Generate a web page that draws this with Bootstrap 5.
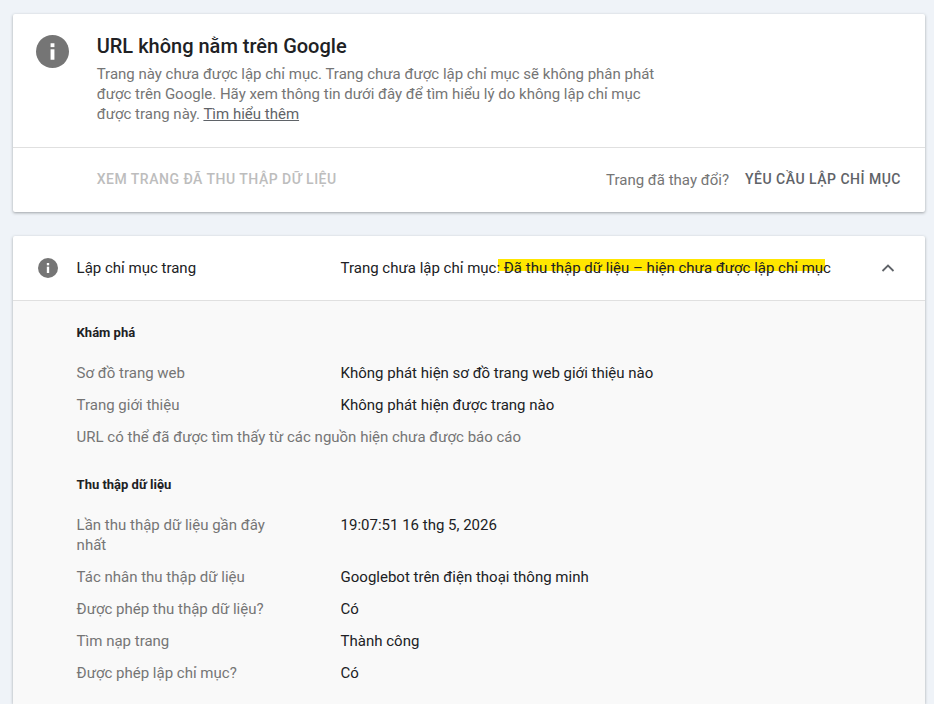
<!DOCTYPE html>
<html lang="vi">
  <head>
    <meta charset="UTF-8" />
    <title>Kiểm tra URL</title>
    <link href="https://cdn.jsdelivr.net/npm/bootstrap@5.3.0/dist/css/bootstrap.min.css" rel="stylesheet" />
    <style>
      html, body { height: 704px; overflow: hidden; }
      body {
        background: #eff3f8;
        font-family: Roboto, "Liberation Sans", sans-serif;
        color: #202124;
        padding: 14px 9px 0 13px;
        font-size: 15px;
        line-height: 20px;
      }
      .sheet {
        background: #fff;
        border-radius: 2px;
        box-shadow: 0 1px 3px rgba(60, 64, 67, 0.45);
      }
      .sheet-main { height: 198px; margin-bottom: 24px; }
      .verdict { height: 134px; padding: 21px 24px 0 23px; border-bottom: 1px solid #e0e0e0; }
      .verdict-text { width: 570px; margin-left: 27.7px; margin-top: -1px; }
      .verdict-title { font-size: 20px; font-weight: 500; line-height: 24px; margin-bottom: 6px; }
      .verdict-desc { color: #757575; }
      .verdict-desc a { color: #5f6368; }
      .info-big { width: 33px; height: 33px; }
      .info-small { width: 20px; height: 20px; margin-right: 18.6px; }
      .actions { height: 64px; padding: 0 24px 0 83.7px; }
      .act-link { font-size: 14px; font-weight: 500; letter-spacing: 0.5px; padding-bottom: 2px; }
      .act-off { color: #bdbdbd; }
      .act-on { color: #5f6368; }
      .act-q { color: #757575; margin-right: 16px; }
      .coverage { height: 65px; padding: 0 29px 0 25px; border-bottom: 1px solid #e0e0e0; }
      .cov-label { width: 264px; }
      .cov-value { position: relative; z-index: 0; }
      .mark-wrap { position: relative; }
      .mark-wrap::before {
        content: "";
        position: absolute;
        z-index: -1;
        left: -6px;
        right: 6px;
        top: 0;
        height: 12px;
        background: #ffe600;
      }
      .detail { background: #f9f9f9; padding: 24px 24px 0 63.6px; height: 403px; }
      .group-title { font-size: 13px; font-weight: 700; line-height: 16px; margin-bottom: 22px; }
      .group-gap { margin-top: 30px; }
      .info-row { display: flex; margin-bottom: 12px; }
      .info-key { width: 264px; flex: none; color: #757575; padding-right: 60px; }
      .info-wide { color: #757575; margin-bottom: 12px; }
    </style>
  </head>
  <body>
    <div class="sheet sheet-main">
      <div class="verdict d-flex align-items-start">
        <svg class="info-big flex-none" viewBox="0 0 24 24"><circle cx="12" cy="12" r="12" fill="#757575"/><rect x="10.6" y="10.4" width="2.8" height="7.6" fill="#fff"/><rect x="10.6" y="6" width="2.8" height="2.8" fill="#fff"/></svg>
        <div class="verdict-text">
          <div class="verdict-title">URL không nằm trên Google</div>
          <div class="verdict-desc">Trang này chưa được lập chỉ mục. Trang chưa được lập chỉ mục sẽ không phân phát được trên Google. Hãy xem thông tin dưới đây để tìm hiểu lý do không lập chỉ mục được trang này. <a href="#">Tìm hiểu thêm</a></div>
        </div>
      </div>
      <div class="actions d-flex align-items-center">
        <span class="act-link act-off">XEM TRANG ĐÃ THU THẬP DỮ LIỆU</span>
        <span class="act-q ms-auto">Trang đã thay đổi?</span>
        <span class="act-link act-on">YÊU CẦU LẬP CHỈ MỤC</span>
      </div>
    </div>

    <div class="sheet">
      <div class="coverage d-flex align-items-center">
        <svg class="info-small" viewBox="0 0 24 24"><circle cx="12" cy="12" r="12" fill="#757575"/><rect x="10.6" y="10.4" width="2.8" height="7.6" fill="#fff"/><rect x="10.6" y="6" width="2.8" height="2.8" fill="#fff"/></svg>
        <span class="cov-label">Lập chỉ mục trang</span>
        <span class="cov-value">Trang chưa lập chỉ mục: <span class="mark-wrap">Đã thu thập dữ liệu – hiện chưa được lập chỉ mục</span></span>
        <svg class="ms-auto" width="16" height="16" viewBox="0 0 16 16"><path d="M2.5 11 8 5.5 13.5 11" fill="none" stroke="#5f6368" stroke-width="1.8"/></svg>
      </div>
      <div class="detail">
        <div class="group-title">Khám phá</div>
        <div class="info-row"><div class="info-key">Sơ đồ trang web</div><div>Không phát hiện sơ đồ trang web giới thiệu nào</div></div>
        <div class="info-row"><div class="info-key">Trang giới thiệu</div><div>Không phát hiện được trang nào</div></div>
        <div class="info-wide">URL có thể đã được tìm thấy từ các nguồn hiện chưa được báo cáo</div>
        <div class="group-title group-gap">Thu thập dữ liệu</div>
        <div class="info-row"><div class="info-key">Lần thu thập dữ liệu gần đây nhất</div><div>19:07:51 16 thg 5, 2026</div></div>
        <div class="info-row"><div class="info-key">Tác nhân thu thập dữ liệu</div><div>Googlebot trên điện thoại thông minh</div></div>
        <div class="info-row"><div class="info-key">Được phép thu thập dữ liệu?</div><div>Có</div></div>
        <div class="info-row"><div class="info-key">Tìm nạp trang</div><div>Thành công</div></div>
        <div class="info-row"><div class="info-key">Được phép lập chỉ mục?</div><div>Có</div></div>
      </div>
    </div>
    <script src="https://cdn.jsdelivr.net/npm/bootstrap@5.3.0/dist/js/bootstrap.bundle.min.js"></script>
  </body>
</html>
